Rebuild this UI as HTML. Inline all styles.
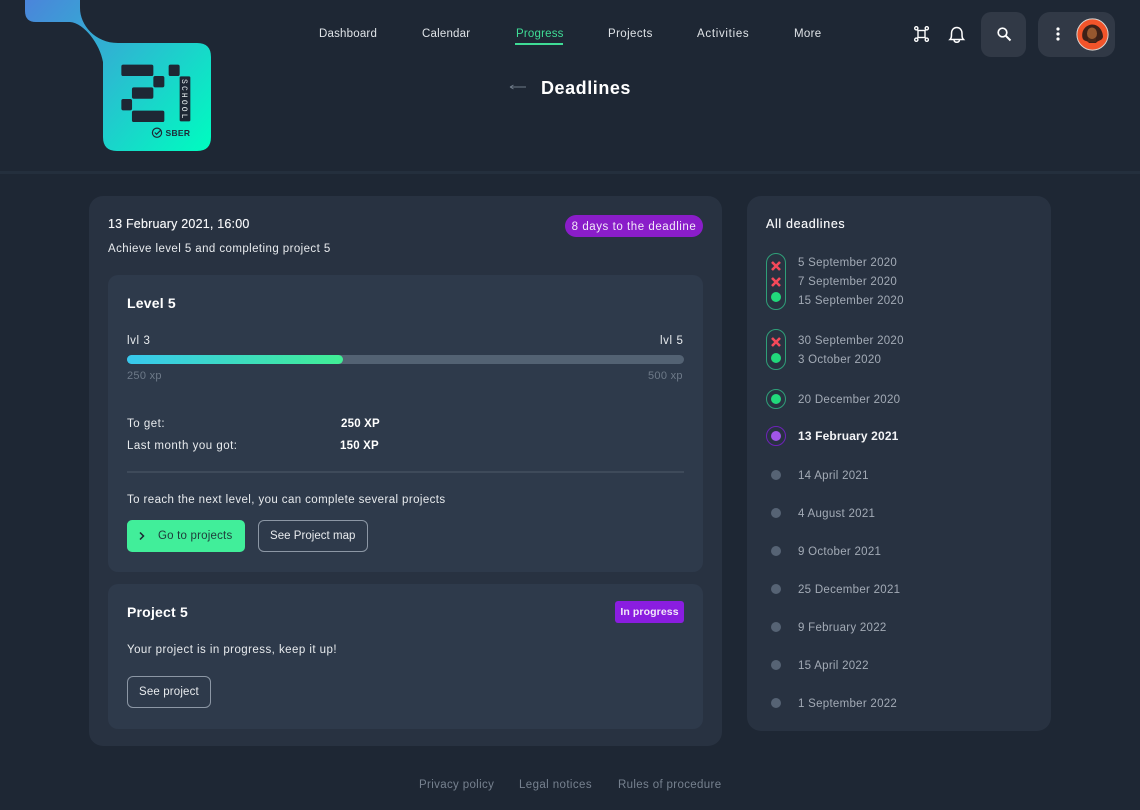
<!DOCTYPE html>
<html><head><meta charset="utf-8"><style>
*{box-sizing:border-box;margin:0;padding:0}
html,body{width:1140px;height:810px;overflow:hidden;background:#1e2734}
body{position:relative;font-family:"Liberation Sans",sans-serif;color:#e8ebee;font-size:12px}
.t{position:absolute;white-space:nowrap;line-height:16px;letter-spacing:.2px}
.b{position:absolute}
.d{color:#a3abb6;font-size:11.5px;letter-spacing:.28px;left:798px}
.dot{position:absolute;left:771px;width:10px;height:10px;border-radius:50%;background:#566374}
.g{position:absolute;left:771px;width:10px;height:10px;border-radius:50%;background:#21d97b}
.ring{position:absolute;left:766px;width:20px;border:1.2px solid #2f9f78;border-radius:10px}
.x{position:absolute;left:770px}
.nav{top:26px;font-size:11.5px;letter-spacing:.2px;color:#dfe3e7}
</style></head><body>
<div class="b" style="left:0;top:171px;width:1140px;height:3px;background:#242f3d"></div>

<svg class="b" style="left:0;top:0" width="240" height="160" viewBox="0 0 240 160">
<defs><linearGradient id="lg" x1="30" y1="0" x2="205" y2="150" gradientUnits="userSpaceOnUse"><stop offset="0" stop-color="#4a86da"/><stop offset=".5" stop-color="#28bfd0"/><stop offset="1" stop-color="#00fbc0"/></linearGradient></defs>
<path d="M25 0V11Q25 22 36 22H70C84 23 100 44 103 62V137Q103 151 117 151H197Q211 151 211 137V57Q211 43 197 43H118C95 43 80 25 80 8V0Z" fill="url(#lg)"/>
<g fill="#1e2734" stroke="#1e2734" stroke-width=".7">
<rect x="121.700" y="65" width="31.300" height="10.700" rx="1.500"/>
<rect x="153.700" y="76.300" width="10.300" height="10.700" rx="1.500"/>
<rect x="132.300" y="87.700" width="20.700" height="10.700" rx="1.500"/>
<rect x="121.700" y="99.300" width="10" height="10.700" rx="1.500"/>
<rect x="132.300" y="111" width="31.700" height="10.700" rx="1.500"/>
<rect x="169" y="65" width="10.300" height="10.700" rx="1.500"/>
<rect x="180" y="76.700" width="10" height="44.300" rx="1"/>
</g>
<text transform="translate(182.200,79) rotate(90)" font-family="Liberation Mono,monospace" font-size="8" fill="#e8eef0" textLength="39.500" lengthAdjust="spacing">SCHOOL</text>
<circle cx="157" cy="132.700" r="4.600" fill="none" stroke="#1e2734" stroke-width="1.200"/>
<path d="M154.800 132.500l1.800 1.800 4.200-4.200" fill="none" stroke="#1e2734" stroke-width="1.200"/>
<text x="165.500" y="136" font-family="Liberation Sans,sans-serif" font-weight="700" font-size="8.500" fill="#1e2734" textLength="24.500" lengthAdjust="spacing">SBER</text>
</svg>

<div class="t nav" style="left:319px">Dashboard</div>
<div class="t nav" style="left:422px">Calendar</div>
<div class="t nav" style="left:516px;color:#3fdc96">Progress</div>
<div class="b" style="left:515px;top:43px;width:48px;height:1.600px;background:#3fdc96"></div>
<div class="t nav" style="left:608px;letter-spacing:.4px">Projects</div>
<div class="t nav" style="left:697px;letter-spacing:.7px">Activities</div>
<div class="t nav" style="left:794px;letter-spacing:.3px">More</div>

<svg class="b" style="left:505px;top:80px" width="24" height="14" viewBox="0 0 24 14"><path d="M5 7H21M5 7L8.500 5M5 7L8.500 9" fill="none" stroke="#6f7b89" stroke-width=".9"/></svg>
<div class="t" style="left:541px;top:78px;line-height:20px;font-size:18px;font-weight:700;color:#fff;letter-spacing:.55px">Deadlines</div>

<svg class="b" style="left:910px;top:22px" width="24" height="24" viewBox="0 0 24 24" fill="none" stroke="#fff" stroke-width="1.400"><rect x="8" y="8.500" width="7" height="7"/><path d="M7.200 7.500L8 8.500M15.800 7.500L15 8.500M7.200 16.500L8 15.500M15.800 16.500L15 15.500"/><circle cx="6.300" cy="6.300" r="1.600"/><circle cx="16.800" cy="6.300" r="1.600"/><circle cx="6.300" cy="17.700" r="1.600"/><circle cx="16.800" cy="17.700" r="1.600"/></svg>
<svg class="b" style="left:945px;top:22px" width="24" height="24" viewBox="0 0 24 24" fill="none" stroke="#fff" stroke-width="1.500"><path d="M5 17.500H18.500C17 16 17 14.500 17 11.500C17 8 15 5.500 11.750 5.500C8.500 5.500 6.500 8 6.500 11.500C6.500 14.500 6.500 16 5 17.500Z"/><path d="M9 18C9.500 21 14 21 14.500 18"/></svg>
<div class="b" style="left:981px;top:12px;width:45px;height:45px;border-radius:10px;background:#313946"></div>
<svg class="b" style="left:994px;top:24px" width="20" height="20" viewBox="0 0 20 20" fill="none" stroke="#fff" stroke-width="1.700"><circle cx="8.500" cy="8.500" r="4.300"/><path d="M11.700 11.700L16.500 16.500" stroke-width="2"/></svg>
<div class="b" style="left:1038px;top:12px;width:77px;height:45px;border-radius:12px;background:#313946"></div>
<svg class="b" style="left:1050px;top:24px" width="16" height="20" viewBox="0 0 16 20" fill="#fff"><circle cx="8" cy="5" r="1.600"/><circle cx="8" cy="10" r="1.600"/><circle cx="8" cy="15" r="1.600"/></svg>
<svg class="b" style="left:1076px;top:18px" width="33" height="33" viewBox="0 0 33 33"><circle cx="16.500" cy="16.500" r="15.600" fill="#f2542a" stroke="#d9d4d0" stroke-width="1"/><path d="M6.500 20C5 12 10 7 16 6.500C23 6.500 27 13 27 19C26 23 22 22 20 25H13C11 22 8 24 6.500 20Z" fill="#3c2118"/><ellipse cx="16" cy="15.500" rx="5" ry="6" fill="#96582f"/><path d="M12 19Q16 23 20 19V24H12Z" fill="#4b2818"/></svg>

<div class="b" style="left:89px;top:196px;width:633px;height:550px;border-radius:14px;background:#283241"></div>
<div class="t" style="left:108px;top:216px;font-size:12.500px;color:#f4f5f7;letter-spacing:.2px;text-shadow:0 0 .4px #f4f5f7">13 February 2021, 16:00</div>
<div class="t" style="left:108px;top:241px;font-size:11.500px;letter-spacing:.42px">Achieve level 5 and completing project 5</div>
<div class="t" style="left:565px;top:215px;width:138px;height:22px;line-height:24px;border-radius:11px;background:#8a1dc9;color:#f2e9f9;text-align:center;font-size:11.500px;letter-spacing:.55px">8 days to the deadline</div>

<div class="b" style="left:108px;top:275px;width:595px;height:297px;border-radius:10px;background:#2e3a4b"></div>
<div class="t" style="left:127px;top:295px;font-size:14px;font-weight:700;color:#fff">Level 5</div>
<div class="t" style="left:127px;top:333px;font-size:11.500px;letter-spacing:.6px">lvl 3</div>
<div class="t" style="left:660px;top:333px;font-size:11.500px;letter-spacing:.6px">lvl 5</div>
<div class="b" style="left:127px;top:355px;width:557px;height:9px;border-radius:5px;background:#536273"></div>
<div class="b" style="left:127px;top:355px;width:216px;height:9px;border-radius:5px;background:linear-gradient(90deg,#38c8ee,#41ee95)"></div>
<div class="t" style="left:127px;top:368px;font-size:11px;color:#6e7a89;letter-spacing:.3px">250 xp</div>
<div class="t" style="left:648px;top:368px;font-size:11px;color:#6e7a89;letter-spacing:.3px">500 xp</div>
<div class="t" style="left:127px;top:416px;font-size:11.500px;letter-spacing:.5px">To get:</div>
<div class="t" style="left:127px;top:438px;font-size:11.500px;letter-spacing:.5px">Last month you got:</div>
<div class="t" style="left:341px;top:416px;font-size:11.500px;font-weight:700;color:#fff">250 XP</div>
<div class="t" style="left:340px;top:438px;font-size:11.500px;font-weight:700;color:#fff">150 XP</div>
<div class="b" style="left:127px;top:471px;width:557px;height:1.500px;background:#3e4a5a"></div>
<div class="t" style="left:127px;top:492px;font-size:11.500px;letter-spacing:.4px">To reach the next level, you can complete several projects</div>
<div class="b" style="left:127px;top:520px;width:118px;height:32px;border-radius:5px;background:#41ee9a"></div>
<svg class="b" style="left:136px;top:530px" width="12" height="12" viewBox="0 0 12 12"><path d="M4 2.500L7.500 6L4 9.500" fill="none" stroke="#1e2734" stroke-width="1.500"/></svg>
<div class="t" style="left:158px;top:528px;font-size:11.500px;letter-spacing:.2px;color:#1f3a3a">Go to projects</div>
<div class="b" style="left:258px;top:520px;width:110px;height:32px;border-radius:6px;border:1px solid #8c97a5"></div>
<div class="t" style="left:270px;top:528px;font-size:11.500px;letter-spacing:.03px">See Project map</div>

<div class="b" style="left:108px;top:584px;width:595px;height:145px;border-radius:10px;background:#2e3a4b"></div>
<div class="t" style="left:127px;top:604px;font-size:14px;font-weight:700;color:#fff">Project 5</div>
<div class="t" style="left:615px;top:601px;width:69px;height:22px;line-height:22px;border-radius:3px;background:#8a1de0;color:#f2e9f9;text-align:center;font-size:10.500px;font-weight:700;letter-spacing:.1px">In progress</div>
<div class="t" style="left:127px;top:642px;font-size:11.500px;letter-spacing:.45px">Your project is in progress, keep it up!</div>
<div class="b" style="left:127px;top:676px;width:84px;height:32px;border-radius:6px;border:1px solid #8c97a5"></div>
<div class="t" style="left:139px;top:684px;font-size:11.500px;letter-spacing:.15px">See project</div>

<div class="b" style="left:747px;top:196px;width:304px;height:535px;border-radius:14px;background:#283241"></div>
<div class="t" style="left:766px;top:216px;font-size:12.500px;color:#f4f5f7;letter-spacing:.65px;text-shadow:0 0 .4px #f4f5f7">All deadlines</div>

<div class="ring" style="top:253px;height:57px"></div>
<svg class="x" style="top:260px" width="12" height="12" viewBox="0 0 12 12"><path d="M2 2L10 10M10 2L2 10" stroke="#f4495a" stroke-width="2.600"/></svg>
<svg class="x" style="top:276px" width="12" height="12" viewBox="0 0 12 12"><path d="M2 2L10 10M10 2L2 10" stroke="#f4495a" stroke-width="2.600"/></svg>
<div class="g" style="top:292px"></div>
<div class="t d" style="top:255px">5 September 2020</div>
<div class="t d" style="top:274px">7 September 2020</div>
<div class="t d" style="top:293px">15 September 2020</div>

<div class="ring" style="top:329px;height:41px"></div>
<svg class="x" style="top:336px" width="12" height="12" viewBox="0 0 12 12"><path d="M2 2L10 10M10 2L2 10" stroke="#f4495a" stroke-width="2.600"/></svg>
<div class="g" style="top:353px"></div>
<div class="t d" style="top:333px">30 September 2020</div>
<div class="t d" style="top:352px">3 October 2020</div>

<div class="ring" style="top:389px;height:20px"></div>
<div class="g" style="top:394px"></div>
<div class="t d" style="top:392px">20 December 2020</div>

<div class="ring" style="top:426px;height:20px;border-color:#6d22b8"></div>
<div class="g" style="top:431px;background:#a155e8"></div>
<div class="t d" style="top:428px;color:#f4f5f7;font-weight:700;font-size:12px;letter-spacing:.15px">13 February 2021</div>

<div class="dot" style="top:470px"></div><div class="t d" style="top:468px">14 April 2021</div>
<div class="dot" style="top:508px"></div><div class="t d" style="top:506px">4 August 2021</div>
<div class="dot" style="top:546px"></div><div class="t d" style="top:544px">9 October 2021</div>
<div class="dot" style="top:584px"></div><div class="t d" style="top:582px">25 December 2021</div>
<div class="dot" style="top:622px"></div><div class="t d" style="top:620px">9 February 2022</div>
<div class="dot" style="top:660px"></div><div class="t d" style="top:658px">15 April 2022</div>
<div class="dot" style="top:698px"></div><div class="t d" style="top:696px">1 September 2022</div>

<div class="t" style="left:419px;top:777px;font-size:11.500px;color:#76818f;letter-spacing:.35px">Privacy policy</div>
<div class="t" style="left:519px;top:777px;font-size:11.500px;color:#76818f;letter-spacing:.4px">Legal notices</div>
<div class="t" style="left:618px;top:777px;font-size:11.500px;color:#76818f;letter-spacing:.35px">Rules of procedure</div>
</body></html>
